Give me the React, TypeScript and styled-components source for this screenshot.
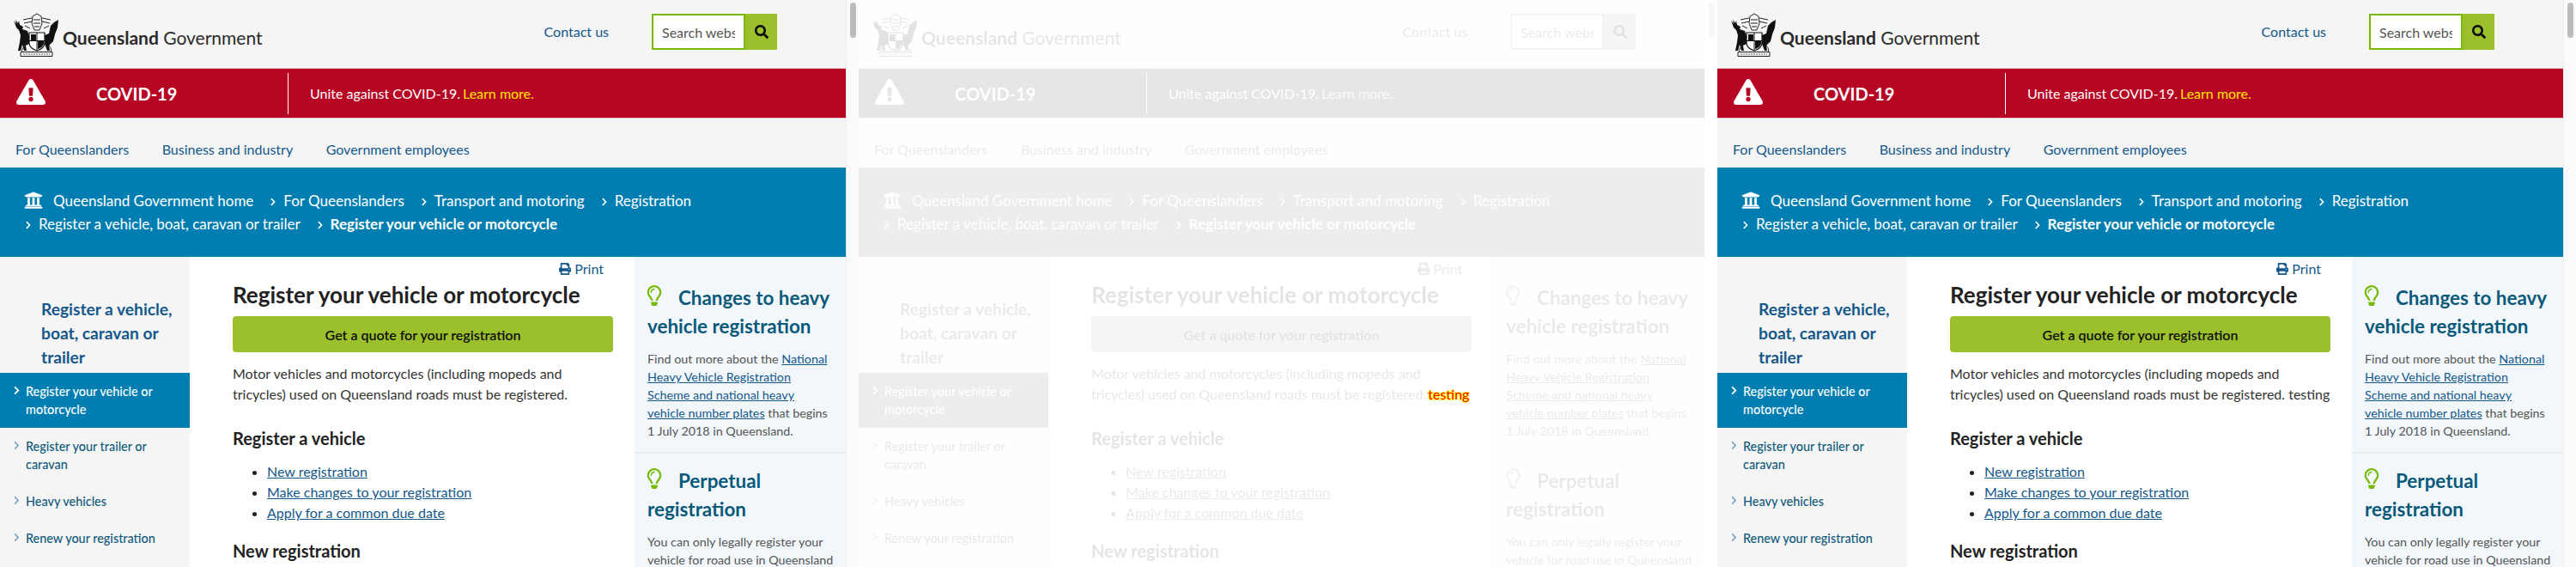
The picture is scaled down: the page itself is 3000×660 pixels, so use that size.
import React from "react";
import styled, { createGlobalStyle } from "styled-components";
import {
  FaChevronRight,
  FaExclamationTriangle,
  FaPrint,
  FaRegLightbulb,
  FaSearch,
  FaUniversity,
} from "react-icons/fa";

const GlobalStyle = createGlobalStyle`
  * {
    box-sizing: border-box;
  }

  html,
  body {
    margin: 0;
    padding: 0;
    background: #fff;
    font-family: "Lato", "Open Sans", sans-serif;
    overflow: hidden;
  }
`;

const Wrapper = styled.div`
  display: flex;
  width: 3000px;
  height: 660px;
  overflow: hidden;
`;

const Panel = styled.div`
  position: relative;
  display: flex;
  flex: 0 0 1000px;
  height: 660px;
  overflow: hidden;
`;

const Fade = styled.div<{ $faded?: boolean }>`
  display: flex;
  width: 100%;
  height: 100%;
  filter: ${(p) => (p.$faded ? "grayscale(1) opacity(0.12)" : "none")};
`;

const Page = styled.div`
  flex: 0 0 985px;
  display: flex;
  flex-direction: column;
  background: #f5f5f5;
`;

const ScrollTrack = styled.div`
  flex: 0 0 15px;
  padding: 3px 3px 0 4px;
  background: #fbfbfb;
  border-left: 1px solid #ececec;
`;

const ScrollThumb = styled.div`
  height: 41px;
  border-radius: 4px;
  background: #bcbcbc;
`;

const Header = styled.header`
  display: flex;
  height: 79px;
  padding: 15px 80px 0 15px;
`;

const Logo = styled.div`
  display: flex;
  align-items: center;
  gap: 4px;
  height: 51px;
  font-size: 21px;
  color: #2a2a2a;

  b {
    font-weight: 700;
  }

  span {
    margin-top: 5px;
  }
`;

const HeaderRight = styled.div`
  display: flex;
  align-items: flex-start;
  margin-left: auto;
  gap: 50px;
  padding-top: 1px;
`;

const ContactLink = styled.a`
  font-size: 16px;
  line-height: 42px;
  color: #13578b;
`;

const SearchBox = styled.div`
  display: flex;
  height: 42px;
`;

const SearchInput = styled.input`
  width: 109px;
  height: 42px;
  padding: 0 10px;
  border: 2px solid #78ba00;
  font-family: inherit;
  font-size: 16px;
  background: #fff;
  outline: none;

  &::placeholder {
    color: #555;
    opacity: 1;
  }
`;

const SearchButton = styled.button`
  display: flex;
  align-items: center;
  justify-content: center;
  width: 37px;
  height: 42px;
  padding: 0;
  border: 0;
  background: #9bc02c;
  color: #0a0a0a;
  font-size: 16px;
`;

const Alert = styled.div`
  display: flex;
  align-items: center;
  height: 59px;
  background: #b70623;
  border-top: 1px solid #edc8cf;
  border-bottom: 1px solid #edc8cf;
  color: #fff;
`;

const AlertIcon = styled.div`
  display: flex;
  flex: 0 0 112px;
  padding: 0 0 3px 19px;
  font-size: 34px;
`;

const AlertTitle = styled.strong`
  flex: 0 0 223px;
  font-size: 20px;
  font-weight: 700;
`;

const AlertText = styled.div`
  display: flex;
  align-items: center;
  height: 48px;
  padding-left: 25px;
  border-left: 1px solid #fff;
  font-size: 16px;

  em {
    font-style: normal;
    color: #ffe600;
    margin-left: 3px;
  }
`;

const TopNav = styled.nav`
  display: flex;
  gap: 38.5px;
  height: 57px;
  padding: 24px 0 0 18px;
  font-size: 16px;
  line-height: 24px;
  color: #13578b;
`;

const Banner = styled.div`
  height: 104px;
  padding: 25px 150px 0 28px;
  background: #007eb1;
`;

const Crumbs = styled.ol`
  display: flex;
  flex-wrap: wrap;
  column-gap: 18px;
  margin: 0;
  padding: 0;
  list-style: none;
  font-size: 17px;
  line-height: 27px;
  color: #fff;
`;

const Crumb = styled.li<{ $current?: boolean }>`
  display: flex;
  align-items: center;
  gap: 7px;
  font-weight: ${(p) => (p.$current ? 700 : 400)};

  svg {
    flex: none;
    font-size: 10px;
    margin-top: 2px;
  }

  svg.home {
    font-size: 22px;
    margin: -2px 5px 0 0;
  }
`;

const Content = styled.div`
  flex: 1;
  display: flex;
  min-height: 0;
`;

const SideNav = styled.aside`
  flex: 0 0 221px;
  padding-top: 47px;
  background: #f5f5f5;
`;

const SideNavTitle = styled.h2`
  margin: 0 0 4px;
  padding: 0 10px 0 48px;
  font-size: 19.2px;
  font-weight: 700;
  line-height: 28px;
  color: #13578b;
`;

const SideNavItem = styled.a<{ $active?: boolean }>`
  display: flex;
  gap: 5px;
  padding: 11px 30px 11px 14px;
  font-size: 14.4px;
  font-weight: 500;
  line-height: 21px;
  background: ${(p) => (p.$active ? "#007eb1" : "transparent")};
  color: ${(p) => (p.$active ? "#fff" : "#0f5a7c")};

  svg {
    flex: none;
    font-size: 11px;
    margin-top: 4px;
    color: ${(p) => (p.$active ? "#fff" : "#7ea8bf")};
  }
`;

const Main = styled.main`
  flex: 0 0 518px;
  padding: 2px 25px 0 50px;
  background: #fff;
  color: #222;
`;

const PrintLink = styled.a`
  display: flex;
  align-items: center;
  justify-content: flex-end;
  gap: 4px;
  padding-right: 11px;
  font-size: 16px;
  line-height: 24px;
  color: #13578b;

  svg {
    font-size: 14px;
  }
`;

const Title = styled.h1`
  margin: 0 0 7px;
  font-size: 26px;
  font-weight: 700;
  line-height: 36px;
  color: #222;
`;

const QuoteButton = styled.a`
  display: flex;
  align-items: center;
  justify-content: center;
  height: 42px;
  border-radius: 4px;
  background: #9bc02c;
  font-size: 16px;
  font-weight: 600;
  color: #0e0e0e;
`;

const Paragraph = styled.p`
  margin: 13px 0 0;
  font-size: 16px;
  line-height: 24px;
  color: #333;
`;

const Heading = styled.h2<{ $top: number }>`
  margin: ${(p) => p.$top}px 0 0;
  font-size: 20px;
  font-weight: 700;
  line-height: 28px;
  color: #222;
`;

const LinkList = styled.ul`
  margin: 13px 0 0;
  padding: 0 0 0 40px;
  font-size: 16px;
  line-height: 24px;
`;

const TextLink = styled.a`
  color: #13578b;
  text-decoration: underline;
`;

const Aside = styled.aside`
  flex: 1;
  padding-top: 16px;
  background: #f2f7fb;
`;

const Tip = styled.section<{ $divider?: boolean }>`
  padding: 15px 14px 14px 15px;
  border-bottom: ${(p) => (p.$divider ? "2px solid #e6edf2" : "0")};
`;

const TipTitle = styled.h3`
  margin: 0 0 11px;
  font-size: 22.4px;
  font-weight: 700;
  line-height: 33px;
  color: #09597a;

  svg {
    margin: 0 16px 0 -4px;
    font-size: 24px;
    color: #78ba00;
    vertical-align: -1px;
  }
`;

const TipText = styled.p`
  margin: 0;
  font-size: 14.3px;
  line-height: 21px;
  color: #555;
`;

const DiffMark = styled.span`
  position: absolute;
  left: 663px;
  top: 447px;
  font-size: 16px;
  line-height: 24px;
  color: #f00;
  text-shadow: 1px 0 0 #ff0, -1px 0 0 #ff0, 0 1px 0 #ff0, 0 -1px 0 #ff0;
`;

const Crest = () => (
  <svg width="54" height="51" viewBox="0 0 54 51">
    {/* stag */}
    <path
      fill="#111"
      d="M1 9 L4 13 L3 8 L6 12 L7 9 L8 14 L12 16 L11 19 L17 21 L19 27 L19 36 L15 38 L16 44 L13 44 L11 37 L9 44 L6 44 L8 34 L9 26 L7 20 L4 17 Z"
    />
    {/* brolga */}
    <path
      fill="#111"
      d="M53 8 L52 17 L49 25 L47 33 L42 38 L43 44 L40 44 L37 36 L37 26 L42 24 L44 15 L48 11 Z"
    />
    {/* helmet and mantling */}
    <g fill="none" stroke="#222" strokeWidth="1">
      <path d="M23 4 L28 1 L33 4 L34 12 L31 20 L25 20 L22 12 Z" />
      <path d="M12 8 L22 6 M34 6 L44 8 M13 12 L22 10 M34 10 L43 12" />
      <path d="M24 8 H32 M24 12 H32 M25 16 H31" />
      <path d="M14 15 L20 18 M42 15 L36 18" />
    </g>
    {/* shield */}
    <path fill="#fff" stroke="#111" strokeWidth="1.2" d="M19 23 H37 V35 Q37 41 28 44 Q19 41 19 35 Z" />
    <path fill="#111" d="M21 25 H27 V32 H21 Z M29 33 H36 V36 Q35 40 29 42 Z" />
    <path stroke="#111" strokeWidth="1" d="M28 23 V44 M19 32.5 H37" />
    {/* ground and motto */}
    <path fill="none" stroke="#333" strokeWidth="1" d="M14 38 Q8 44 12 46 M42 38 Q47 44 43 46" />
    <path fill="none" stroke="#222" strokeWidth="1" d="M9 45.5 H46 V50.5 H9 Z" />
    <path stroke="#666" strokeWidth="1" strokeDasharray="2 1" d="M12 48 H43" />
  </svg>
);

const SiteHeader = () => (
  <Header>
    <Logo>
      <Crest />
      <span>
        <b>Queensland</b> Government
      </span>
    </Logo>
    <HeaderRight>
      <ContactLink>Contact us</ContactLink>
      <SearchBox>
        <SearchInput placeholder="Search website" readOnly />
        <SearchButton aria-label="Search">
          <FaSearch />
        </SearchButton>
      </SearchBox>
    </HeaderRight>
  </Header>
);

const crumbs = [
  "For Queenslanders",
  "Transport and motoring",
  "Registration",
  "Register a vehicle, boat, caravan or trailer",
];

const sideItems = [
  { label: "Register your vehicle or motorcycle", active: true },
  { label: "Register your trailer or caravan" },
  { label: "Heavy vehicles" },
  { label: "Renew your registration" },
];

const PageView = ({ testing }: { testing?: boolean }) => (
  <Page>
    <SiteHeader />
    <Alert>
      <AlertIcon>
        <FaExclamationTriangle />
      </AlertIcon>
      <AlertTitle>COVID-19</AlertTitle>
      <AlertText>
        Unite against COVID-19.<em>Learn more.</em>
      </AlertText>
    </Alert>
    <TopNav>
      <a>For Queenslanders</a>
      <a>Business and industry</a>
      <a>Government employees</a>
    </TopNav>
    <Banner>
      <Crumbs>
        <Crumb>
          <FaUniversity className="home" />
          Queensland Government home
        </Crumb>
        {crumbs.map((c) => (
          <Crumb key={c}>
            <FaChevronRight />
            {c}
          </Crumb>
        ))}
        <Crumb $current>
          <FaChevronRight />
          Register your vehicle or motorcycle
        </Crumb>
      </Crumbs>
    </Banner>
    <Content>
      <SideNav>
        <SideNavTitle>Register a vehicle, boat, caravan or trailer</SideNavTitle>
        {sideItems.map((item) => (
          <SideNavItem key={item.label} $active={item.active}>
            <FaChevronRight />
            {item.label}
          </SideNavItem>
        ))}
      </SideNav>
      <Main>
        <PrintLink>
          <FaPrint />
          Print
        </PrintLink>
        <Title>Register your vehicle or motorcycle</Title>
        <QuoteButton>Get a quote for your registration</QuoteButton>
        <Paragraph>
          Motor vehicles and motorcycles (including mopeds and tricycles) used on
          Queensland roads must be registered.{testing ? " testing" : ""}
        </Paragraph>
        <Heading $top={25}>Register a vehicle</Heading>
        <LinkList>
          <li>
            <TextLink>New registration</TextLink>
          </li>
          <li>
            <TextLink>Make changes to your registration</TextLink>
          </li>
          <li>
            <TextLink>Apply for a common due date</TextLink>
          </li>
        </LinkList>
        <Heading $top={18}>New registration</Heading>
      </Main>
      <Aside>
        <Tip $divider>
          <TipTitle>
            <FaRegLightbulb />
            Changes to heavy vehicle registration
          </TipTitle>
          <TipText>
            Find out more about the{" "}
            <TextLink>National Heavy Vehicle Registration Scheme and national heavy vehicle number plates</TextLink>{" "}
            that begins 1 July 2018 in Queensland.
          </TipText>
        </Tip>
        <Tip>
          <TipTitle>
            <FaRegLightbulb />
            Perpetual registration
          </TipTitle>
          <TipText>
            You can only legally register your vehicle for road use in Queensland
          </TipText>
        </Tip>
      </Aside>
    </Content>
  </Page>
);

const Scrollbar = () => (
  <ScrollTrack>
    <ScrollThumb />
  </ScrollTrack>
);

const App = () => (
  <>
    <GlobalStyle />
    <Wrapper>
      <Panel>
        <PageView />
        <Scrollbar />
      </Panel>
      <Panel>
        <Fade $faded>
          <PageView />
          <Scrollbar />
        </Fade>
        <DiffMark>testing</DiffMark>
      </Panel>
      <Panel>
        <PageView testing />
        <Scrollbar />
      </Panel>
    </Wrapper>
  </>
);

export default App;
